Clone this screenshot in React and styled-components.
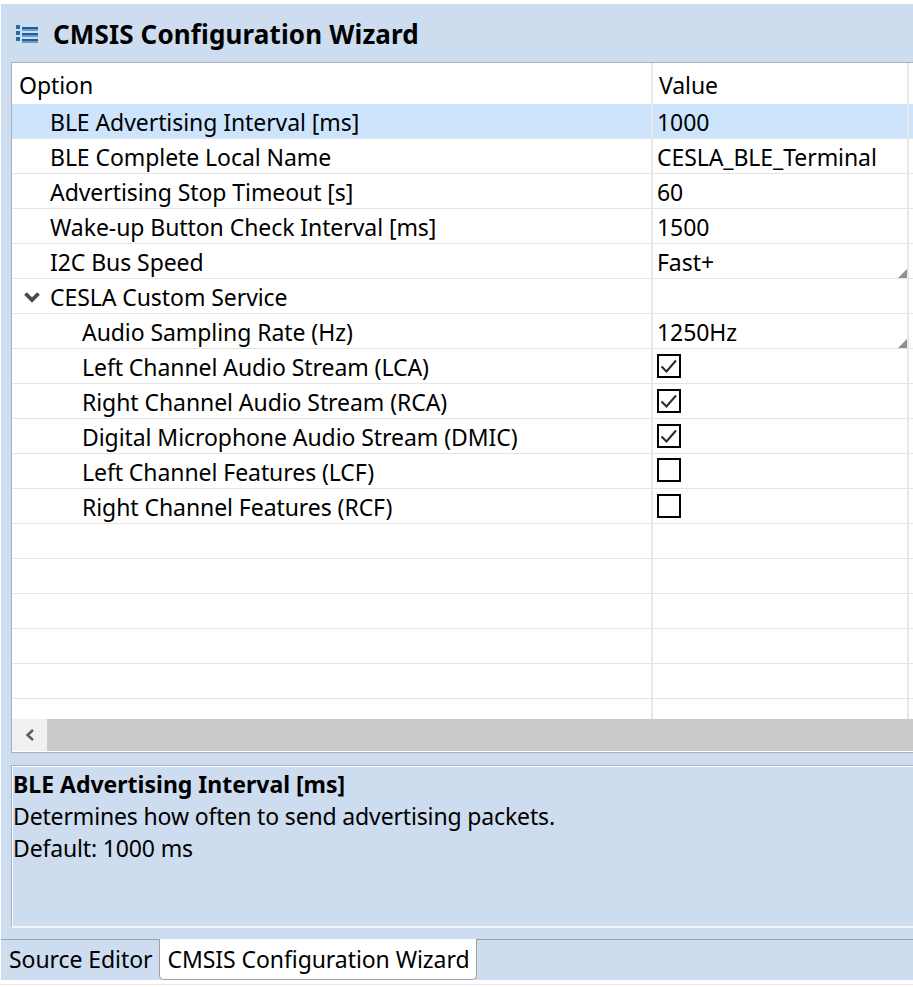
import styled, { createGlobalStyle } from "styled-components"

const GlobalStyle = createGlobalStyle`
html, body { margin: 0; padding: 0; background: #fff; overflow: hidden; }
body { font-family: "Noto Sans", "Open Sans", sans-serif; color: #000; }
`

const COL = "641px 256px 1fr"

const Panel = styled.div`
width: 912px;
margin: 4px 0 0 1px;
height: 976px;
background: #cddcee;
display: flex;
flex-direction: column;
overflow: hidden;
`
const Header = styled.div`
height: 58px;
flex: none;
display: flex;
align-items: center;
gap: 14px;
padding: 2px 0 0 14px;
box-sizing: border-box;
`
const Title = styled.h1`
margin: 0;
font-size: 26px;
font-weight: 700;
letter-spacing: 0.14px;
`
const TableBox = styled.div`
flex: none;
height: 691px;
margin-left: 10px;
border: 1px solid #a9aeba;
border-right: none;
background: #fff;
display: flex;
flex-direction: column;
box-sizing: border-box;
`
const Rows = styled.div`
flex: 1;
overflow: hidden;
`
const HeadRow = styled.div`
height: 41px;
display: grid;
grid-template-columns: ${COL};
font-size: 23px;
letter-spacing: -0.07px;
`
const HeadCell = styled.div`
padding: 4px 0 0 ${p => p.$indent}px;
border-right: 2px solid #e8e8e8;
&:last-child { border-right: none; }
line-height: 36px;
`
const Row = styled.div`
height: 35px;
box-sizing: border-box;
display: grid;
grid-template-columns: ${COL};
background: ${p => (p.$selected ? "#cce5fd" : "#fff")};
border-bottom: 1px solid #e4e4e4;
font-size: 23px;
letter-spacing: -0.07px;
line-height: 34px;
`
const NameCell = styled.div`
display: flex;
align-items: center;
padding: 1px 0 0 ${p => 38 + p.$level * 32}px;
border-right: 2px solid #e8e8e8;
white-space: nowrap;
position: relative;
`
const ValueCell = styled.div`
display: flex;
align-items: center;
padding: 1px 0 0 4px;
border-right: 2px solid #e8e8e8;
position: relative;
white-space: nowrap;
`
const EndCell = styled.div``
const Twistie = styled.svg`
position: absolute;
left: 11px;
top: 12px;
`
const Corner = styled.span`
position: absolute;
right: 0;
bottom: 1px;
width: 0;
height: 0;
border-style: solid;
border-width: 0 0 9px 9px;
border-color: transparent transparent #8f8f8f transparent;
`
const Check = styled.svg`
display: block;
margin-top: ${p => p.$shift}px;
`
const ScrollBar = styled.div`
flex: none;
height: 32px;
margin-bottom: 1px;
display: flex;
background: #cbcbcb;
`
const ScrollBtn = styled.div`
width: 35px;
background: #f0f0f0;
display: flex;
align-items: center;
justify-content: center;
`
const Detail = styled.div`
flex: none;
height: 163px;
margin: 12px 0 0 10px;
border-top: 1px solid #a9aeba;
border-left: 1px solid #a9aeba;
border-bottom: 2px solid #f2f5f9;
box-shadow: inset 1px 1px 0 #fff;
box-sizing: border-box;
padding: 2px 0 0 1px;
font-size: 23px;
letter-spacing: -0.15px;
line-height: 32px;
`
const DetailTitle = styled.div`
font-weight: 700;
letter-spacing: 0;
`
const TabStrip = styled.div`
flex: none;
margin-top: 11px;
height: 42px;
border-top: 1px solid #a0a0a0;
display: flex;
align-items: flex-start;
font-size: 23px;
letter-spacing: -0.07px;
`
const Tab = styled.div`
height: 41px;
line-height: 39px;
padding: 0 7px 0 8px;
box-sizing: border-box;
white-space: nowrap;
`
const ActiveTab = styled(Tab)`
background: #fff;
margin-top: -1px;
height: 41px;
line-height: 41px;
padding: 0 7px 0 7px;
border: 1px solid #a0a0a0;
border-top: none;
border-radius: 0 0 5px 5px;
`
const Footer = styled.div`
height: 1px;
margin-top: 4px;
background: #e6e8f4;
`

const rows = [
  { name: "BLE Advertising Interval [ms]", value: "1000", level: 0, selected: true },
  { name: "BLE Complete Local Name", value: "CESLA_BLE_Terminal", level: 0 },
  { name: "Advertising Stop Timeout [s]", value: "60", level: 0 },
  { name: "Wake-up Button Check Interval [ms]", value: "1500", level: 0 },
  { name: "I2C Bus Speed", value: "Fast+", level: 0, combo: true },
  { name: "CESLA Custom Service", level: 0, expanded: true },
  { name: "Audio Sampling Rate (Hz)", value: "1250Hz", level: 1, combo: true },
  { name: "Left Channel Audio Stream (LCA)", level: 1, checked: true, shift: -2 },
  { name: "Right Channel Audio Stream (RCA)", level: 1, checked: true, shift: -2 },
  { name: "Digital Microphone Audio Stream (DMIC)", level: 1, checked: true, shift: -2 },
  { name: "Left Channel Features (LCF)", level: 1, checked: false, shift: -4 },
  { name: "Right Channel Features (RCF)", level: 1, checked: false, shift: -2 },
  {}, {}, {}, {}, {}, {},
]

const ListIcon = () => (
  <svg width="24" height="20" viewBox="0 0 24 20">
    <g fill="#2a6aa5">
      <rect x="1" y="1" width="4" height="4" />
      <rect x="1" y="7" width="4" height="4" />
      <rect x="1" y="13" width="4" height="4" />
    </g>
    <g fill="#1f5f9f">
      <rect x="7" y="3" width="16" height="2" />
      <rect x="7" y="9" width="16" height="2" />
      <rect x="7" y="15" width="16" height="2" />
    </g>
    <g fill="#6a9bc8">
      <rect x="7" y="5" width="16" height="2" />
      <rect x="7" y="11" width="16" height="2" />
      <rect x="7" y="17" width="16" height="2" />
    </g>
  </svg>
)

const CheckBox = ({ checked, shift }) => (
  <Check $shift={shift} width="24" height="24" viewBox="0 0 24 24">
    <rect x="1" y="1" width="22" height="22" fill="#fff" stroke="#000" strokeWidth="2" />
    {checked && <path d="M4.5 12.5 L9.5 17.5 L19 6.5" fill="none" stroke="#2a2a2a" strokeWidth="2" />}
  </Check>
)

const App = () => {
  return (
    <>
      <GlobalStyle />
      <Panel>
        <Header>
          <ListIcon />
          <Title>CMSIS Configuration Wizard</Title>
        </Header>
        <TableBox>
          <Rows>
            <HeadRow>
              <HeadCell $indent={7}>Option</HeadCell>
              <HeadCell $indent={6}>Value</HeadCell>
              <HeadCell />
            </HeadRow>
            {rows.map((r, i) => (
              <Row key={i} $selected={r.selected}>
                <NameCell $level={r.level || 0}>
                  {r.expanded && (
                    <Twistie width="18" height="12" viewBox="0 0 18 12">
                      <path d="M2.5 2.5 L9 9 L15.5 2.5" fill="none" stroke="#4a4a4a" strokeWidth="3.8" />
                    </Twistie>
                  )}
                  {r.name}
                </NameCell>
                <ValueCell>
                  {r.value}
                  {r.checked !== undefined && <CheckBox checked={r.checked} shift={r.shift} />}
                  {r.combo && <Corner />}
                </ValueCell>
                <EndCell />
              </Row>
            ))}
          </Rows>
          <ScrollBar>
            <ScrollBtn>
              <svg width="12" height="14" viewBox="0 0 12 14">
                <path d="M9 2 L3.5 7 L9 12" fill="none" stroke="#5a5a5a" strokeWidth="2.4" />
              </svg>
            </ScrollBtn>
          </ScrollBar>
        </TableBox>
        <Detail>
          <DetailTitle>BLE Advertising Interval [ms]</DetailTitle>
          <div>Determines how often to send advertising packets.</div>
          <div>Default: 1000 ms</div>
        </Detail>
        <TabStrip>
          <Tab>Source Editor</Tab>
          <ActiveTab>CMSIS Configuration Wizard</ActiveTab>
        </TabStrip>
      </Panel>
      <Footer />
    </>
  )
}

export default App
